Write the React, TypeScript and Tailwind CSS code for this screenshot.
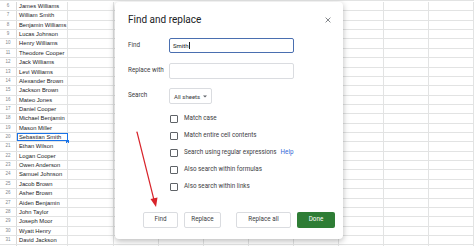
import React from "react";

const names: [number, string][] = [
  [6, "James Williams"],
  [7, "William Smith"],
  [8, "Benjamin Williams"],
  [9, "Lucas Johnson"],
  [10, "Henry Williams"],
  [11, "Theodore Cooper"],
  [12, "Jack Williams"],
  [13, "Levi Williams"],
  [14, "Alexander Brown"],
  [15, "Jackson Brown"],
  [16, "Mateo Jones"],
  [17, "Daniel Cooper"],
  [18, "Michael Benjamin"],
  [19, "Mason Miller"],
  [20, "Sebastian Smith"],
  [21, "Ethan Wilson"],
  [22, "Logan Cooper"],
  [23, "Owen Anderson"],
  [24, "Samuel Johnson"],
  [25, "Jacob Brown"],
  [26, "Asher Brown"],
  [27, "Aiden Benjamin"],
  [28, "John Taylor"],
  [29, "Joseph Moor"],
  [30, "Wyatt Henry"],
  [31, "David Jackson"],
  [32, ""],
];

const extraCols = [46, 45, 45, 45, 45, 45, 45, 45, 45];

function Checkbox({ label, help }: { label: string; help?: boolean }) {
  return (
    <div className="flex items-center h-[17px] ml-[42px]">
      <div className="w-[8px] h-[8px] border border-[#5f6368] rounded-[1px] shrink-0" />
      <span className="ml-[6px] text-[6.3px] text-[#3c4043] whitespace-nowrap">{label}</span>
      {help && <span className="ml-[4px] text-[6.3px] text-[#3367d6]">Help</span>}
    </div>
  );
}

export default function App() {
  return (
    <div className="relative w-[474px] h-[246px] overflow-hidden bg-white font-['Liberation_Sans',Arial,sans-serif]">
      {/* spreadsheet grid */}
      <div className="pt-[1px] border-t border-[#e2e3e3]">
        {names.map(([n, name]) => (
          <div key={n} className="flex h-[9.36px] border-b border-[#e2e3e3] box-border">
            <div className="w-[17px] shrink-0 border-r border-[#d9d9d9] text-center text-[4.5px] leading-[8.4px] text-[#80868b]">
              {n === 32 ? "" : n}
            </div>
            <div
              className={
                "relative w-[51px] shrink-0 border-r border-[#e2e3e3] pl-[2px] text-[5.8px] leading-[8.4px] text-[#202124] whitespace-nowrap overflow-visible" +
                (n === 20 ? " outline outline-1 outline-[#1a73e8] -outline-offset-1" : "")
              }
            >
              {name}
              {n === 20 && (
                <div className="absolute right-[-1.5px] bottom-[-1.5px] w-[3px] h-[3px] bg-[#1a73e8]" />
              )}
            </div>
            {extraCols.map((w, i) => (
              <div key={i} style={{ width: w }} className="shrink-0 border-r border-[#e2e3e3]" />
            ))}
          </div>
        ))}
      </div>

      {/* dialog */}
      <div className="absolute left-[115px] top-[2px] w-[228px] h-[237px] bg-white rounded-[4px] shadow-[0_2px_6px_rgba(0,0,0,0.28)] flex flex-col pl-[13px] pr-[8px] font-['Roboto',Arial,sans-serif]">
        <div className="flex items-center justify-between h-[12px] mt-[12px]">
          <span className="text-[10px] leading-[12px] text-[#202124]">Find and replace</span>
          <svg width="6" height="6" viewBox="0 0 10 10" className="mr-[4px]">
            <path d="M1 1 L9 9 M9 1 L1 9" stroke="#5f6368" strokeWidth="1.3" />
          </svg>
        </div>

        <div className="flex items-center h-[15px] mt-[12px]">
          <span className="w-[41px] text-[6.3px] text-[#3c4043]">Find</span>
          <div className="w-[125px] h-[15px] border border-[#4a6fb0] rounded-[2px] flex items-center pl-[3px]">
            <span className="text-[6px] text-[#202124]">Smith</span>
            <span className="w-[0.6px] h-[7px] bg-[#202124] ml-[0.5px]" />
          </div>
        </div>

        <div className="flex items-center h-[16px] mt-[10px]">
          <span className="w-[41px] text-[6.3px] text-[#3c4043] whitespace-nowrap">Replace with</span>
          <div className="w-[125px] h-[16px] border border-[#dadce0] rounded-[2px]" />
        </div>

        <div className="flex items-center h-[16px] mt-[9px]">
          <span className="w-[41px] text-[6.3px] text-[#3c4043]">Search</span>
          <div className="w-[43px] h-[16px] border border-[#dadce0] rounded-[2px] flex items-center pl-[4px]">
            <span className="text-[6px] text-[#3c4043] whitespace-nowrap">All sheets</span>
            <svg width="4" height="3" viewBox="0 0 4 3" className="ml-[3px]">
              <path d="M0 0.5 L4 0.5 L2 2.5 Z" fill="#5f6368" />
            </svg>
          </div>
        </div>

        <div className="flex flex-col mt-[6px]">
          <Checkbox label="Match case" />
          <Checkbox label="Match entire cell contents" />
          <Checkbox label="Search using regular expressions" help />
          <Checkbox label="Also search within formulas" />
          <Checkbox label="Also search within links" />
        </div>

        <div className="flex justify-end items-center mt-[17px] h-[16px]">
          <div className="w-[35px] h-[16px] border border-[#dadce0] rounded-[2px] flex items-center justify-center text-[6.3px] text-[#3c4043]">
            Find
          </div>
          <div className="ml-[6px] w-[37px] h-[16px] border border-[#dadce0] rounded-[2px] flex items-center justify-center text-[6.3px] text-[#3c4043]">
            Replace
          </div>
          <div className="ml-[15px] w-[55px] h-[16px] border border-[#dadce0] rounded-[2px] flex items-center justify-center text-[6.3px] text-[#3c4043]">
            Replace all
          </div>
          <div className="ml-[6px] w-[38px] h-[16px] bg-[#2e7d35] rounded-[2px] flex items-center justify-center text-[6.3px] text-white">
            Done
          </div>
        </div>
      </div>

      {/* red arrow annotation */}
      <svg className="absolute left-0 top-0 pointer-events-none" width="474" height="246" viewBox="0 0 474 246">
        <line x1="137" y1="132" x2="154" y2="200" stroke="#d8232a" strokeWidth="1.2" strokeLinecap="round" />
        <path d="M156 207 L150.5 199 L157.5 197.5 Z" fill="#d8232a" />
      </svg>
    </div>
  );
}
